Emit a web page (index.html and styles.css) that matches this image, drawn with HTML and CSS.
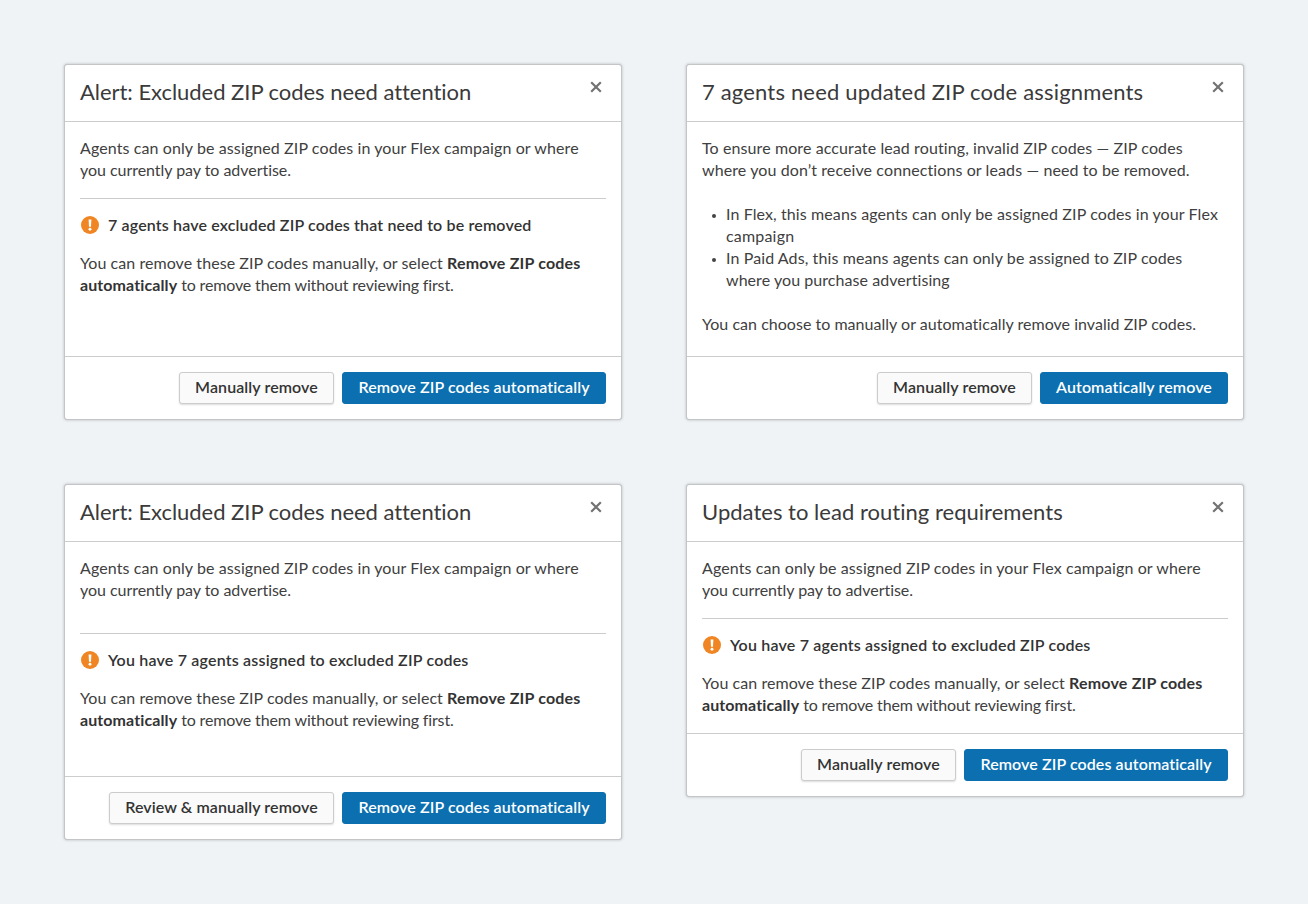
FILE: index.html
```
<!DOCTYPE html>
<html lang="en">
<head>
<meta charset="utf-8">
<title>ZIP code alerts</title>
<link rel="stylesheet" href="styles.css">
</head>
<body>
<svg class="sprite" aria-hidden="true">
  <symbol id="close" viewBox="0 0 12 12"><path d="M1.2 1.2 10.8 10.8M10.8 1.2 1.2 10.8" fill="none" stroke="currentColor" stroke-width="2.2"/></symbol>
  <symbol id="warning" viewBox="0 0 18 18"><circle cx="9" cy="9" r="9" fill="#f08623"/><path d="M7.6 3.6h2.8l-.4 7.2H8z" fill="#fff"/><circle cx="9" cy="13.2" r="1.45" fill="#fff"/></symbol>
</svg>
<main class="board">
  <section class="dialog">
    <header class="head"><h2 class="title">Alert: Excluded ZIP codes need attention</h2><button class="close" aria-label="Close"><svg><use href="#close"/></svg></button></header>
    <div class="body">
      <p class="copy"><span class="open">Agents can only be assigned ZIP codes in your Flex campaign or where</span><br><span class="snug">you currently pay to advertise.</span></p>
      <hr class="rule">
      <h3 class="notice"><svg><use href="#warning"/></svg><span class="text">7 agents have excluded ZIP codes that need to be removed</span></h3>
      <p class="copy"><span class="even">You can remove these ZIP codes manually, or select </span><b class="airy">Remove ZIP codes</b><br><b class="open">automatically</b><span class="tight"> to remove them without reviewing first.</span></p>
    </div>
    <footer class="foot"><button class="btn">Manually remove</button><button class="btn primary">Remove ZIP codes automatically</button></footer>
  </section>

  <section class="dialog">
    <header class="head"><h2 class="title roomy">7 agents need updated ZIP code assignments</h2><button class="close" aria-label="Close"><svg><use href="#close"/></svg></button></header>
    <div class="body">
      <p class="copy"><span class="open">To ensure more accurate lead routing, invalid ZIP codes — ZIP codes</span><br><span class="open">where you don’t receive connections or leads — need to be removed.</span></p>
      <ul class="list copy">
        <li><span class="open">In Flex, this means agents can only be assigned ZIP codes in your Flex</span><br><span class="airy">campaign</span></li>
        <li><span class="open">In Paid Ads, this means agents can only be assigned to ZIP codes</span><br><span class="even">where you purchase advertising</span></li>
      </ul>
      <p class="copy slight">You can choose to manually or automatically remove invalid ZIP codes.</p>
    </div>
    <footer class="foot"><button class="btn">Manually remove</button><button class="btn primary auto">Automatically remove</button></footer>
  </section>

  <section class="dialog">
    <header class="head"><h2 class="title">Alert: Excluded ZIP codes need attention</h2><button class="close" aria-label="Close"><svg><use href="#close"/></svg></button></header>
    <div class="body">
      <p class="copy"><span class="open">Agents can only be assigned ZIP codes in your Flex campaign or where</span><br><span class="snug">you currently pay to advertise.</span></p>
      <hr class="rule loose">
      <h3 class="notice"><svg><use href="#warning"/></svg><span class="airy">You have 7 agents assigned to excluded ZIP codes</span></h3>
      <p class="copy"><span class="even">You can remove these ZIP codes manually, or select </span><b class="airy">Remove ZIP codes</b><br><b class="open">automatically</b><span class="tight"> to remove them without reviewing first.</span></p>
    </div>
    <footer class="foot"><button class="btn wide">Review &amp; manually remove</button><button class="btn primary">Remove ZIP codes automatically</button></footer>
  </section>

  <section class="dialog compact">
    <header class="head"><h2 class="title slight">Updates to lead routing requirements</h2><button class="close" aria-label="Close"><svg><use href="#close"/></svg></button></header>
    <div class="body">
      <p class="copy"><span class="open">Agents can only be assigned ZIP codes in your Flex campaign or where</span><br><span class="snug">you currently pay to advertise.</span></p>
      <hr class="rule">
      <h3 class="notice"><svg><use href="#warning"/></svg><span class="airy">You have 7 agents assigned to excluded ZIP codes</span></h3>
      <p class="copy"><span class="even">You can remove these ZIP codes manually, or select </span><b class="airy">Remove ZIP codes</b><br><b class="open">automatically</b><span class="tight"> to remove them without reviewing first.</span></p>
    </div>
    <footer class="foot"><button class="btn">Manually remove</button><button class="btn primary">Remove ZIP codes automatically</button></footer>
  </section>
</main>
</body>
</html>
```
FILE: styles.css
```
* { box-sizing: border-box; }
body {
  margin: 0;
  min-height: 904px;
  background: #eff3f6;
  color: #333;
  font-family: Lato, "Liberation Sans", sans-serif;
  font-variant-ligatures: none;
}
h2, h3, p, ul { margin: 0; }
.sprite { display: none; }
.board {
  display: grid;
  grid-template-columns: 558px 558px;
  grid-auto-rows: 356px;
  gap: 64px;
  padding: 64px;
}
.dialog {
  display: flex;
  flex-direction: column;
  background: #fff;
  background-clip: padding-box;
  border: 1px solid #c3c5c7;
  border-radius: 3px;
  box-shadow: 0 0 3px rgba(0, 0, 0, .24);
}
.compact { height: 313px; }
.head {
  display: flex;
  justify-content: space-between;
  height: 57px;
  padding: 0 19px 0 15px;
  border-bottom: 1px solid #ccc;
}
.title { font-size: 22px; font-weight: 400; line-height: 53px; letter-spacing: -.04px; white-space: nowrap; color: #3a3a3a; }
.title.roomy { letter-spacing: .17px; }
.close {
  width: 12px;
  height: 12px;
  margin-top: 16px;
  padding: 0;
  border: 0;
  background: none;
  color: #737373;
}
.close svg { display: block; width: 12px; height: 12px; }
.body { flex: 1; padding: 15px 15px 0; }
.copy { font-size: 16px; line-height: 22px; white-space: nowrap; color: #404040; }
.copy b { color: #333; }
.open { letter-spacing: .1px; }
.even { letter-spacing: .06px; }
.slight, .title.slight { letter-spacing: .025px; }
.snug { letter-spacing: -.04px; }
.tight { letter-spacing: -.14px; }
.airy { letter-spacing: .19px; }
.rule { height: 1px; margin: 17px 0 15px; border: 0; background: #ccc; }
.rule.loose { margin-top: 32px; }
.notice {
  display: flex;
  align-items: center;
  height: 22px;
  margin-bottom: 16px;
  padding-left: 1px;
  gap: 9px;
  font-size: 16px;
  font-weight: 600;
  line-height: 22px;
  letter-spacing: .15px;
  white-space: nowrap;
}
.notice svg { width: 18px; height: 18px; }
.list { margin: 22px 0; padding: 0; list-style: none; }
.list li { position: relative; padding-left: 24px; }
.list li::before {
  content: "";
  position: absolute;
  left: 10px;
  top: 11px;
  width: 4px;
  height: 4px;
  border-radius: 50%;
  background: #444;
}
.foot {
  display: flex;
  justify-content: flex-end;
  gap: 8px;
  height: 63px;
  padding: 15px 15px 0;
  border-top: 1px solid #ccc;
}
.btn {
  width: 155px;
  height: 32px;
  padding: 0 0 3px;
  border: 1px solid #ccc;
  border-radius: 3px;
  background: #fafafa;
  box-shadow: 0 1px 2px rgba(0, 0, 0, .14);
  color: #333;
  font: 600 16px/27px Lato, "Liberation Sans", sans-serif;
  letter-spacing: .09px;
  white-space: nowrap;
}
.wide { width: 225px; }
.primary { width: 264px; border-color: #0b6fb0; background: #0b6fb0; box-shadow: none; color: #fff; }
.auto { width: 188px; }
```
